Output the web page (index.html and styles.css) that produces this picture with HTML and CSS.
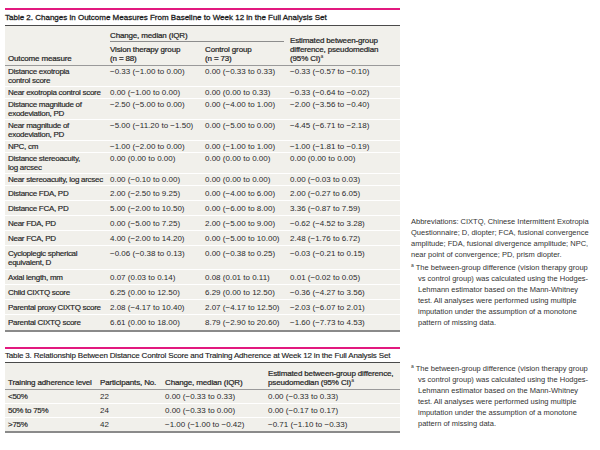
FILE: index.html
```html
<!DOCTYPE html>
<html>
<head>
<meta charset="utf-8">
<link rel="stylesheet" href="styles.css">
</head>
<body>
<div class="page">
  <section class="block block-t2">
    <div class="tbl t2">
      <div class="ttl">Table 2. Changes in Outcome Measures From Baseline to Week 12 in the Full Analysis Set</div>
      <table>
        <colgroup><col class="c1"><col class="c2"><col class="c3"><col class="c4"></colgroup>
        <thead>
          <tr class="h1">
            <th rowspan="2" class="bot">Outcome measure</th>
            <th colspan="2" class="span"><div class="rule">Change, median (IQR)</div></th>
            <th rowspan="2" class="bot">Estimated between-group<br>difference, pseudomedian<br>(95% CI)<sup>a</sup></th>
          </tr>
          <tr class="h2">
            <th>Vision therapy group<br>(n = 88)</th>
            <th>Control group<br>(n = 73)</th>
          </tr>
        </thead>
        <tbody>
          <tr class="tight"><td class="lab">Distance exotropia<br>control score</td><td>−0.33 (−1.00 to 0.00)</td><td>0.00 (−0.33 to 0.33)</td><td>−0.33 (−0.57 to −0.10)</td></tr>
          <tr class="tight"><td class="lab">Near exotropia control score</td><td>0.00 (−1.00 to 0.00)</td><td>0.00 (0.00 to 0.33)</td><td>−0.33 (−0.64 to −0.02)</td></tr>
          <tr class="tight"><td class="lab">Distance magnitude of<br>exodeviation, PD</td><td>−2.50 (−5.00 to 0.00)</td><td>0.00 (−4.00 to 1.00)</td><td>−2.00 (−3.56 to −0.40)</td></tr>
          <tr class="tight"><td class="lab">Near magnitude of<br>exodeviation, PD</td><td>−5.00 (−11.20 to −1.50)</td><td>0.00 (−5.00 to 0.00)</td><td>−4.45 (−6.71 to −2.18)</td></tr>
          <tr class="tight"><td class="lab">NPC, cm</td><td>−1.00 (−2.00 to 0.00)</td><td>0.00 (−1.00 to 1.00)</td><td>−1.00 (−1.81 to −0.19)</td></tr>
          <tr class="tight"><td class="lab">Distance stereoacuity,<br>log arcsec</td><td>0.00 (0.00 to 0.00)</td><td>0.00 (0.00 to 0.00)</td><td>0.00 (0.00 to 0.00)</td></tr>
          <tr class="tight"><td class="lab">Near stereoacuity, log arcsec</td><td>0.00 (−0.10 to 0.00)</td><td>0.00 (0.00 to 0.00)</td><td>0.00 (−0.03 to 0.03)</td></tr>
          <tr><td class="lab">Distance FDA, PD</td><td>2.00 (−2.50 to 9.25)</td><td>0.00 (−4.00 to 6.00)</td><td>2.00 (−0.27 to 6.05)</td></tr>
          <tr><td class="lab">Distance FCA, PD</td><td>5.00 (−2.00 to 10.50)</td><td>0.00 (−6.00 to 8.00)</td><td>3.36 (−0.87 to 7.59)</td></tr>
          <tr><td class="lab">Near FDA, PD</td><td>0.00 (−5.00 to 7.25)</td><td>2.00 (−5.00 to 9.00)</td><td>−0.62 (−4.52 to 3.28)</td></tr>
          <tr><td class="lab">Near FCA, PD</td><td>4.00 (−2.00 to 14.20)</td><td>0.00 (−5.00 to 10.00)</td><td>2.48 (−1.76 to 6.72)</td></tr>
          <tr><td class="lab">Cycloplegic spherical<br>equivalent, D</td><td>−0.06 (−0.38 to 0.13)</td><td>0.00 (−0.38 to 0.25)</td><td>−0.03 (−0.21 to 0.15)</td></tr>
          <tr><td class="lab">Axial length, mm</td><td>0.07 (0.03 to 0.14)</td><td>0.08 (0.01 to 0.11)</td><td>0.01 (−0.02 to 0.05)</td></tr>
          <tr><td class="lab">Child CIXTQ score</td><td>6.25 (0.00 to 12.50)</td><td>6.29 (0.00 to 12.50)</td><td>−0.36 (−4.27 to 3.56)</td></tr>
          <tr><td class="lab">Parental proxy CIXTQ score</td><td>2.08 (−4.17 to 10.40)</td><td>2.07 (−4.17 to 12.50)</td><td>−2.03 (−6.07 to 2.01)</td></tr>
          <tr><td class="lab">Parental CIXTQ score</td><td>6.61 (0.00 to 18.00)</td><td>8.79 (−2.90 to 20.60)</td><td>−1.60 (−7.73 to 4.53)</td></tr>
        </tbody>
      </table>
    </div>
    <aside class="notes notes-t2">
      <p class="abbr">Abbreviations: CIXTQ, Chinese Intermittent Exotropia Questionnaire; D, diopter; FCA, fusional convergence amplitude; FDA, fusional divergence amplitude; NPC, near point of convergence; PD, prism diopter.</p>
      <p class="fn"><sup>a</sup> The between-group difference (vision therapy group vs control group) was calculated using the Hodges-Lehmann estimator based on the Mann-Whitney test. All analyses were performed using multiple imputation under the assumption of a monotone pattern of missing data.</p>
    </aside>
  </section>

  <section class="block block-t3">
    <div class="tbl t3">
      <div class="ttl">Table 3. Relationship Between Distance Control Score and Training Adherence at Week 12 in the Full Analysis Set</div>
      <table>
        <colgroup><col class="d1"><col class="d2"><col class="d3"><col class="d4"></colgroup>
        <thead>
          <tr class="h3">
            <th class="bot">Training adherence level</th>
            <th class="bot">Participants, No.</th>
            <th class="bot">Change, median (IQR)</th>
            <th class="bot">Estimated between-group difference,<br>pseudomedian (95% CI)<sup>a</sup></th>
          </tr>
        </thead>
        <tbody>
          <tr><td class="lab">&lt;50%</td><td>22</td><td>0.00 (−0.33 to 0.33)</td><td>0.00 (−0.33 to 0.33)</td></tr>
          <tr><td class="lab">50% to 75%</td><td>24</td><td>0.00 (−0.33 to 0.00)</td><td>0.00 (−0.17 to 0.17)</td></tr>
          <tr><td class="lab">&gt;75%</td><td>42</td><td>−1.00 (−1.00 to −0.42)</td><td>−0.71 (−1.10 to −0.33)</td></tr>
        </tbody>
      </table>
    </div>
    <aside class="notes notes-t3">
      <p class="fn"><sup>a</sup> The between-group difference (vision therapy group vs control group) was calculated using the Hodges-Lehmann estimator based on the Mann-Whitney test. All analyses were performed using multiple imputation under the assumption of a monotone pattern of missing data.</p>
    </aside>
  </section>
</div>
</body>
</html>
```

FILE: styles.css
```css
* { box-sizing: border-box; }
html, body { margin: 0; padding: 0; background: #ffffff; }
body {
  font-family: "Liberation Sans", Arial, sans-serif;
  color: #2b2b2b;
  font-size: 8px;
}
.page {
  padding: 8px 0 0 5px;
  width: 600px;
}
.block {
  display: flex;
  align-items: flex-end;
}
.block-t3 { margin-top: 15px; }
.tbl {
  width: 395px;
  flex: none;
  border-top: 2px solid #e2197f;
}
.ttl {
  font-size: 8px;
  line-height: 15px;
  white-space: nowrap;
  border-bottom: 1px solid #4a4a4a;
  color: #1f1f1f;
  -webkit-text-stroke: 0.3px #1f1f1f;
}
.t3 .ttl {
  line-height: 13px;
  letter-spacing: -0.17px;
  -webkit-text-stroke: 0.15px #1f1f1f;
}
table {
  width: 100%;
  border-collapse: collapse;
  table-layout: fixed;
  background: #f1f0eb;
}
col.c1 { width: 102px; }
col.c2 { width: 95px; }
col.c3 { width: 85px; }
col.c4 { width: 113px; }
col.d1 { width: 92px; }
col.d2 { width: 65px; }
col.d3 { width: 103px; }
col.d4 { width: 135px; }
th {
  text-align: left;
  font-weight: normal;
  line-height: 9px;
  padding: 0 3px;
  white-space: nowrap;
  letter-spacing: -0.15px;
  color: #262626;
  -webkit-text-stroke: 0.22px #262626;
}
th.bot { vertical-align: bottom; padding-bottom: 2px; }
thead { border-bottom: 1px solid #9a9a9a; }
tr.h1 th.span { padding-top: 5px; padding-bottom: 0; }
.rule { border-bottom: 1px solid #8d8d8d; padding-bottom: 1px; }
tr.h2 th { padding-top: 3px; padding-bottom: 2px; vertical-align: top; }
tr.h3 th { padding-top: 6px; }
sup { font-size: 5px; line-height: 0; vertical-align: 3px; -webkit-text-stroke: 0; }
td {
  line-height: 9px;
  padding: 3px 3px 2px;
  vertical-align: top;
  border-bottom: 1px solid #ffffff;
  white-space: nowrap;
  color: #2b2b2b;
}
.t3 td { padding: 2px 3px; }
tr.tight td { padding-top: 1px; padding-bottom: 1px; }
td.lab {
  color: #262626;
  letter-spacing: -0.28px;
  -webkit-text-stroke: 0.18px #262626;
}
tbody tr:last-child td { border-bottom: 2px solid #8a8a8a; padding-bottom: 3px; }
.t3 tbody tr:last-child td { padding-bottom: 2px; }
.notes {
  margin-left: 11px;
  width: 182px;
  font-size: 7.5px;
  line-height: 11px;
  color: #333333;
}
.notes p { margin: 0; }
.notes .abbr { margin-bottom: 2px; }
.notes .fn { padding-left: 7px; text-indent: -7px; }
.notes .fn sup { font-size: 5px; vertical-align: 3px; }
.notes-t2 { padding-bottom: 4px; }
.notes-t3 { padding-bottom: 4px; }
```
